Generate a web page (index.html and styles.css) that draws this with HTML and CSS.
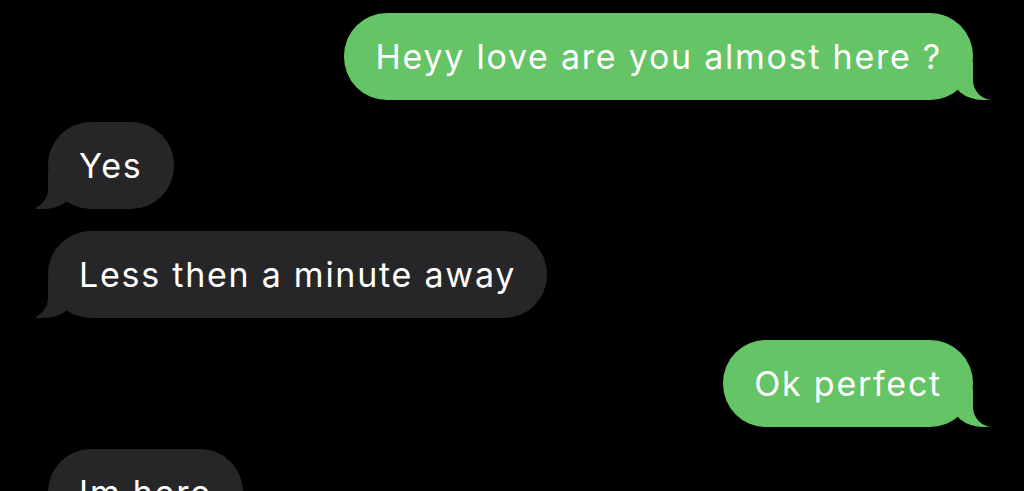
FILE: index.html
```html
<!DOCTYPE html>
<html lang="en">
  <head>
    <meta charset="UTF-8" />
    <meta name="viewport" content="width=device-width, initial-scale=1.0" />
    <title>Messages</title>
    <link rel="stylesheet" href="styles.css">
  </head>
  <body>
    <div class="thread">
      <div class="bubble sent">Heyy love are you almost here ?</div>
      <div class="bubble received">Yes</div>
      <div class="bubble received">Less then a minute away</div>
      <div class="bubble sent">Ok perfect</div>
      <div class="bubble received">Im here</div>
    </div>
  </body>
</html>
```

FILE: styles.css
```css
body {
  margin: 0;
  background: #000;
  font-family: Inter, "Noto Sans", sans-serif;
  overflow: hidden;
}
.thread {
  display: flex;
  flex-direction: column;
  gap: 22px;
  padding: 13px 51px 0 48px;
}
.bubble {
  position: relative;
  color: #fff;
  font-size: 34px;
  letter-spacing: 1.75px;
  line-height: 41px;
  padding: 23px 31px 23px 31px;
  border-radius: 43px;
  white-space: nowrap;
}
.sent {
  align-self: flex-end;
  background: #65c466;
}
.received {
  align-self: flex-start;
  background: #262628;
}
.sent::before,
.received::before {
  content: "";
  position: absolute;
  bottom: 0;
  width: 40px;
  height: 38px;
}
.sent::after,
.received::after {
  content: "";
  position: absolute;
  bottom: 0;
  width: 22px;
  height: 40px;
  background: #000;
}
.sent::before {
  right: -18px;
  background: #65c466;
  border-bottom-left-radius: 32px 26px;
}
.sent::after {
  right: -22px;
  border-bottom-left-radius: 20px;
}
.received::before {
  left: -12px;
  background: #262628;
  border-bottom-right-radius: 32px 26px;
}
.received::after {
  left: -22px;
  border-bottom-right-radius: 20px;
}
```
